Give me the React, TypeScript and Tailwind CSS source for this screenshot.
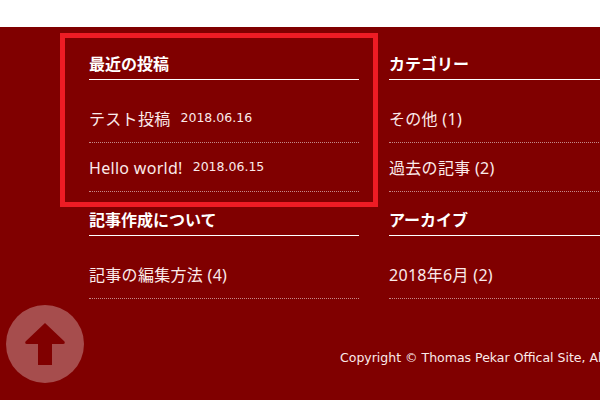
const font = "[font-family:'Noto_Sans','Noto_Sans_CJK_JP',sans-serif]";
const latin = "[font-family:'DejaVu_Sans','Noto_Sans_CJK_JP',sans-serif]";

function Widget({ title, items }: { title: string; items: { label: string; date?: string }[] }) {
  return (
    <div className="w-[270px] shrink-0">
      <h3 className="h-[26px] border-b border-white text-[16px] leading-[20px] font-bold text-white">{title}</h3>
      <ul className="pt-[14px]">
        {items.map((item) => (
          <li key={item.label} className="flex h-[49px] items-center gap-[10px] border-b border-dotted border-[#c58a8a] pt-[1px] text-[16px] tracking-[0.3px] text-[#fbeaea]">
            <span>{item.label}</span>
            {item.date && <span className={`text-[12.5px] tracking-normal ${latin}`}>{item.date}</span>}
          </li>
        ))}
      </ul>
    </div>
  );
}

export default function App() {
  return (
    <div className={`relative h-[400px] w-[600px] overflow-hidden bg-white ${font}`}>
      <div className="mt-[27px] h-[373px] bg-[#800000] pt-[27px] pl-[89px]">
        <div className="flex gap-[30px]">
          <Widget
            title="最近の投稿"
            items={[
              { label: 'テスト投稿', date: '2018.06.16' },
              { label: 'Hello world!', date: '2018.06.15' },
            ]}
          />
          <Widget title="カテゴリー" items={[{ label: 'その他 (1)' }, { label: '過去の記事 (2)' }]} />
        </div>
        <div className="mt-[18px] flex gap-[30px]">
          <Widget title="記事作成について" items={[{ label: '記事の編集方法 (4)' }]} />
          <Widget title="アーカイブ" items={[{ label: '2018年6月 (2)' }]} />
        </div>
        <p className={`mt-[50px] pl-[251px] text-[12.5px] whitespace-nowrap text-[#fbeaea] ${latin}`}>
          Copyright © Thomas Pekar Offical Site, All Rights Reserved.
        </p>
      </div>

      {/* highlight box drawn over the first widget */}
      <div className="absolute top-[33px] left-[60px] h-[174px] w-[318px] border-[5px] border-[#ed1c24]" />

      {/* back to top button */}
      <div className="absolute top-[305px] left-[6px] flex h-[78px] w-[78px] items-center justify-center rounded-full bg-white/30">
        <svg width="40" height="42" viewBox="0 0 40 42" className="text-[#800000]">
          <path d="M20 0 L39.5 18.5 Q40.5 21 38 21 H27 V42 H13 V21 H2 Q-0.5 21 0.5 18.5 Z" fill="currentColor" />
        </svg>
      </div>
    </div>
  );
}
